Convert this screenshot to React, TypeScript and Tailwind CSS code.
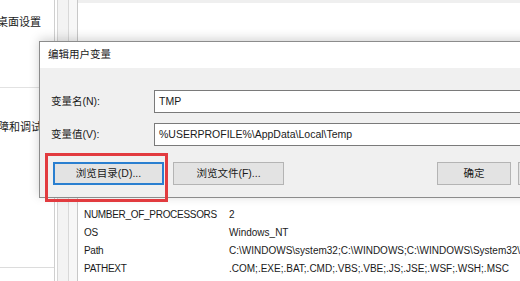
import React from "react";

const FONT = { fontFamily: '"Liberation Sans", "Noto Sans CJK SC", sans-serif' };

const ROWS = [
  { name: "NUMBER_OF_PROCESSORS", value: "2" },
  { name: "OS", value: "Windows_NT" },
  { name: "Path", value: "C:\\WINDOWS\\system32;C:\\WINDOWS;C:\\WINDOWS\\System32\\Wbem" },
  { name: "PATHEXT", value: ".COM;.EXE;.BAT;.CMD;.VBS;.VBE;.JS;.JSE;.WSF;.WSH;.MSC" },
];

function Button({ label, focused, width }: { label: string; focused?: boolean; width: string }) {
  return (
    <div
      className={`${width} h-[23px] shrink-0 flex items-center justify-center text-[10.5px] text-[#1a1a1a] ${
        focused ? "border-2 border-[#2a7fd0] bg-[#e3e3e3]" : "border border-[#b4b4b4] bg-[#e3e3e3]"
      }`}
    >
      {label}
    </div>
  );
}

export default function App() {
  return (
    <div className="relative w-[520px] h-[281px] overflow-hidden bg-white text-[#1a1a1a]" style={FONT}>
      {/* Background window */}
      <div className="flex h-full">
        {/* Left settings panel */}
        <div className="w-[54px] shrink-0 flex flex-col bg-white overflow-hidden">
          <div className="h-[88px] border-b border-[#e2e2e2] pt-[14px] -ml-[3px] text-[11px] whitespace-nowrap">
            桌面设置
          </div>
          <div className="h-[180px] border-b border-[#dcdcdc] pt-[31px] -ml-[2px] text-[11px] whitespace-nowrap">
            障和调试
          </div>
        </div>
        {/* Scroll strip */}
        <div className="w-[23px] shrink-0 flex border-l border-[#cfcfcf] bg-[#f3f3f3]">
          <div className="w-[3px] border-r border-[#d6d6d6] bg-white" />
          <div className="flex-1" />
          <div className="w-[9px] border-l border-[#d8d8d8] bg-[#f7f7f7]" />
        </div>
        {/* Variable list */}
        <div className="flex-1 flex flex-col border-l border-[#c8c8c8] bg-white">
          <div className="h-[3px] bg-[#efefef]" />
          <div className="flex flex-col pt-[203px] pl-[6px] text-[10px] leading-[18px] whitespace-nowrap">
            {ROWS.map((r) => (
              <div key={r.name} className="flex">
                <span className="w-[145px] shrink-0 tracking-[-0.3px]">{r.name}</span>
                <span>{r.value}</span>
              </div>
            ))}
          </div>
        </div>
      </div>

      {/* Edit dialog */}
      <div className="absolute left-[39px] top-[41px] w-[520px] h-[157px] flex flex-col border border-[#8c8c8c] bg-[#f0f0f0] shadow-[0_-2px_10px_rgba(0,0,0,0.18)]">
        <div className="h-[26px] shrink-0 bg-white flex items-center pl-[8px] text-[10.5px]">编辑用户变量</div>
        <div className="flex flex-col pt-[22px] pl-[11px] text-[10.5px]">
          <div className="flex items-center h-[23px]">
            <span className="w-[103px] shrink-0">变量名(N):</span>
            <div className="flex-1 h-[23px] flex items-center border border-[#7a7a7a] bg-white pl-[4px]">
              TMP
            </div>
          </div>
          <div className="flex items-center h-[23px] mt-[10px]">
            <span className="w-[103px] shrink-0">变量值(V):</span>
            <div className="flex-1 h-[23px] flex items-center border border-[#7a7a7a] bg-white pl-[4px]">
              %USERPROFILE%\AppData\Local\Temp
            </div>
          </div>
          <div className="flex items-center mt-[16px] pl-[2px]">
            <Button label="浏览目录(D)..." focused width="w-[111px]" />
            <div className="w-[9px] shrink-0" />
            <Button label="浏览文件(F)..." width="w-[111px]" />
            <div className="w-[153px] shrink-0" />
            <Button label="确定" width="w-[74px]" />
            <div className="w-[7px] shrink-0" />
            <Button label="取消" width="w-[74px]" />
          </div>
        </div>
      </div>

      {/* Red highlight annotation */}
      <div className="absolute left-[45px] top-[153px] w-[123px] h-[49px] border-[3px] border-[#e23b3f]" />
    </div>
  );
}
